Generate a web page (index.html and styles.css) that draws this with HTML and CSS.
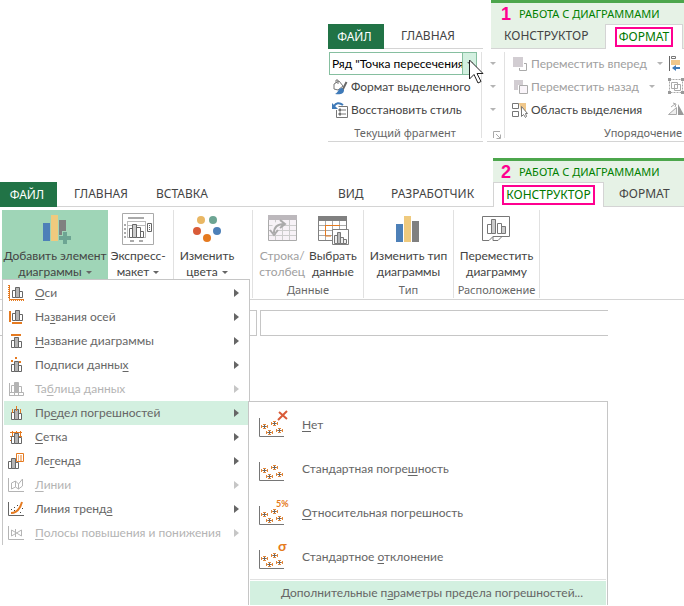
FILE: index.html
```
<!DOCTYPE html>
<html lang="ru">
<head>
  <meta charset="UTF-8" />
  <meta name="viewport" content="width=device-width, initial-scale=1.0"/>
  <title>Работа с диаграммами</title>
  <link rel="stylesheet" href="styles.css">
</head>
<body>

<!-- shared icon parts -->
<svg class="defs" width="0" height="0" aria-hidden="true">
  <symbol id="bars" viewBox="0 0 11 12">
    <path d="M.5 4.5h3v7h-3zM7.5 5.5h3v6h-3z" fill="#fff" stroke="currentColor"/>
    <path d="M3.5 1.5h4v10h-4z" fill="#b4b4b4" stroke="currentColor"/>
  </symbol>
  <symbol id="cross" viewBox="0 0 7 7">
    <path d="M.5 2v3M6.5 2v3M1 3.500h5M2 1.500h3M2 5.500h3" stroke="#e2873a" fill="none"/>
    <path d="M3.5 2v3M2 3.5h3" stroke="#666" fill="none"/>
  </symbol>
  <symbol id="scatter" viewBox="0 0 30 30">
    <path d="M2.500 8v18.500H27" stroke="#767676" fill="none"/>
    <use href="#cross" x="4" y="13" width="7" height="7"/>
    <use href="#cross" x="14" y="10" width="7" height="7"/>
    <use href="#cross" x="9" y="19" width="7" height="7"/>
    <use href="#cross" x="19" y="17" width="7" height="7"/>
  </symbol>
</svg>

<section class="format-ribbon">
  <div class="fragment">
    <nav class="tabs">
      <button class="tab file">ФАЙЛ</button>
      <button class="tab home">ГЛАВНАЯ</button>
    </nav>
    <div class="fragment-body">
      <div class="fragment-main">
        <div class="combo">
          <select aria-label="Элемент диаграммы"><option>Ряд "Точка пересечения"</option></select>
          <span class="combo-arrow"><i class="caret"></i></span>
          <svg class="cursor" width="16" height="26" viewBox="0 0 16 26"><path d="M1.500 1v19l4.500-4.500 4 8.500 3-1.500-4-8h6z" fill="#fff" stroke="#222"/></svg>
        </div>
        <button class="row-button">
          <svg width="16" height="16" viewBox="0 0 16 16"><path d="M2 5l5-3 4 5-5 4-4-1zM4 4V1h2v4" fill="#fff" stroke="#777"/><path d="M14.500 3l-4 8" stroke="#666" stroke-width="2"/><path d="M10 9c-4 0-3 4-7 6 5 1 9 0 9-4z" fill="#3f7ab8"/></svg>
          Формат выделенного
        </button>
        <button class="row-button">
          <svg width="16" height="16" viewBox="0 0 16 16"><path d="M6.500 4.500h9v11h-11V8" fill="#fff" stroke="#777"/><path d="M7 7h2v2H7zM7 11h2v2H7zM10 8h4M10 12h4" fill="#666" stroke="#777"/><path d="M11 3C7 0 4 1 2 4" fill="none" stroke="#3f7ab8" stroke-width="2"/><path d="M0 1v6h6z" fill="#3f7ab8"/></svg>
          Восстановить стиль
        </button>
        <div class="group-label">Текущий фрагмент</div>
      </div>
    </div>
  </div>

  <div class="arrange">
    <div class="context">
      <div class="context-title"><b>1</b>РАБОТА С ДИАГРАММАМИ</div>
      <nav class="tabs">
        <button class="tab designer">КОНСТРУКТОР</button>
        <button class="tab active"><span class="marked">ФОРМАТ</span></button>
      </nav>
    </div>
    <div class="arrange-body">
      <div class="carets">
        <i class="caret light"></i><i class="caret light"></i><i class="caret light"></i>
        <svg class="launcher" width="8" height="8" viewBox="0 0 8 8"><path d="M.5 7V.5H7M3 3l4 4M7.500 3.500v4h-4" fill="none" stroke="#aaa"/></svg>
      </div>
      <div class="arrange-list">
        <button class="row-button" disabled>
          <svg width="16" height="16" viewBox="0 0 16 16"><path d="M1 1h10v10H1z" fill="#d2cdd2"/><path d="M12 7.500h2.500v7h-7V12" fill="none" stroke="#aaa"/></svg>
          Переместить вперед<i class="caret light"></i>
        </button>
        <button class="row-button" disabled>
          <svg width="16" height="16" viewBox="0 0 16 16"><path d="M2 1h9v5H6v5H2z" fill="#d2cdd2"/><path d="M7.500 6.500h8v8h-8z" fill="#faf5fa" stroke="#aaa"/></svg>
          Переместить назад<i class="caret light"></i>
        </button>
        <button class="row-button">
          <svg width="16" height="16" viewBox="0 0 16 16"><path d="M7 1h7v8H9z" fill="#efc78b"/><path d="M.5 1.500h6v5h-6zM.5 9.500h6v5h-6z" fill="#fff" stroke="#777"/><path d="M9.500 4.500v10l2-2 2 3 1-1-1-3h2z" fill="#fff" stroke="#777"/></svg>
          Область выделения
        </button>
        <div class="group-label">Упорядочение</div>
      </div>
      <div class="tools">
        <svg width="14" height="16" viewBox="0 0 14 16"><path d="M1.500 1v15" stroke="#666"/><path d="M3.500 1.500h4v2h-4z" fill="#fff" stroke="#777"/><path d="M3 5h9v5H3z" fill="#efc78b"/><path d="M12 13H6" stroke="#3f7ab8" stroke-width="2"/><path d="M4 13l4-3v6z" fill="#3f7ab8"/></svg>
        <svg width="16" height="16" viewBox="0 0 16 16"><path d="M1.500 1.500h13v13h-13z" fill="none" stroke="#aaa" stroke-dasharray="2 1"/><path d="M3.500 4.500h6v6h-6zM6.500 6.500h6v6h-6z" fill="none" stroke="#aaa"/><path d="M0 0h3v3H0zM13 0h3v3h-3zM0 13h3v3H0zM13 13h3v3h-3z" fill="#999"/></svg>
        <svg width="16" height="16" viewBox="0 0 16 16"><path d="M.5 13.500h8v-7z" fill="#eee" stroke="#aaa"/><path d="M10 3v11h6z" fill="#999"/><path d="M3 6l4-3M5 2l3 1-1 3" fill="none" stroke="#aaa"/></svg>
      </div>
    </div>
  </div>
</section>

<section class="design-ribbon">
  <div class="header">
    <nav class="tabs main-tabs">
      <button class="tab file">ФАЙЛ</button>
      <button class="tab home">ГЛАВНАЯ</button>
      <button class="tab insert">ВСТАВКА</button>
      <button class="tab view">ВИД</button>
      <button class="tab developer">РАЗРАБОТЧИК</button>
    </nav>
    <div class="context">
      <div class="context-title"><b>2</b>РАБОТА С ДИАГРАММАМИ</div>
      <nav class="tabs">
        <button class="tab active"><span class="marked">КОНСТРУКТОР</span></button>
        <button class="tab format">ФОРМАТ</button>
      </nav>
    </div>
  </div>

  <div class="groups">
    <div class="group layouts">
      <div class="group-buttons">
        <button class="big-button add-element">
          <svg width="32" height="32" viewBox="0 0 32 32"><path d="M4 10h7v18H4z" fill="#4d80b8"/><path d="M12 2h7v26h-7z" fill="#efca7e"/><path d="M20 7h7v15h-7z" fill="#808080"/><path d="M23 18h6v5h4v6h-4v4h-6v-4h-4v-6h4z" fill="#9fd5b7"/><path d="M24 19h4v4h4v4h-4v4h-4v-4h-4v-4h4z" fill="#6da593"/></svg>
          <span>Добавить элемент<br>диаграммы<i class="caret"></i></span>
        </button>
        <button class="big-button express">
          <svg width="32" height="32" viewBox="0 0 32 32"><path d="M.5.500h31v31H.500z" fill="#fff" stroke="#aaa"/><path d="M6 5h16M2 12h2M2 16h2M2 20h2M2 24h2M8 28h4M17 28h4" stroke="#aaa" stroke-width="2"/><path d="M5 8.500h19M5.500 8v17M5 24.500h19M6 12.500h17M23.500 8v17" stroke="#bbb"/><path d="M7.500 15.500h3v9h-3zM14.500 14.500h4v10h-4zM18.500 18.500h3v6h-3z" fill="#fff" stroke="#666"/><path d="M10.500 11.500h4v13h-4z" fill="#ccc" stroke="#666"/><path d="M25.500 10.500h4v8h-4z" fill="#fff" stroke="#666"/><path d="M27 12h1v1h-1zM27 14h1v1h-1zM27 16h1v1h-1z" fill="#666"/></svg>
          <span>Экспресс-<br>макет<i class="caret"></i></span>
        </button>
      </div>
    </div>
    <div class="group colors">
      <div class="group-buttons">
        <button class="big-button">
          <svg width="32" height="32" viewBox="0 0 32 32"><circle cx="10" cy="7" r="4" fill="#e9b764"/><circle cx="22" cy="7" r="4" fill="#6da593"/><circle cx="6" cy="18" r="4" fill="#d95b38"/><circle cx="26" cy="18" r="4" fill="#4d80b8"/><circle cx="16" cy="25" r="4" fill="#e57a20"/></svg>
          <span>Изменить<br>цвета<i class="caret"></i></span>
        </button>
      </div>
    </div>
    <div class="group data">
      <div class="group-buttons">
        <button class="big-button" disabled>
          <svg width="32" height="32" viewBox="0 0 32 32"><path d="M2.500 2.500h28v25h-28z" fill="#f7f2f7" stroke="#aaa"/><path d="M2 2h29v5H2z" fill="#bcb8bc"/><path d="M3 12.500h27M3 17.500h27M3 22.500h27M9.500 7v20M16.500 7v20M23.500 7v20" stroke="#ccc"/><path d="M8 21C6 14 11 9 18 10" stroke="#f7f2f7" stroke-width="5" fill="none"/><path d="M8 20c0-6 4-9 10-9M14 7l5 4-5 4M4 17l4 5 4-5" fill="none" stroke="#aaa" stroke-width="2"/></svg>
          <span>Строка/<br>столбец</span>
        </button>
        <button class="big-button">
          <svg width="32" height="32" viewBox="0 0 32 32"><path d="M1.500 3.500h28v24h-28z" fill="#fff" stroke="#808080"/><path d="M1 3h29v5H1z" fill="#808080"/><path d="M2 12.500h27M2 17.500h27M2 22.500h27M8.500 8v19M15.500 8v19M22.500 8v19" stroke="#aaa"/><path d="M9 12.500h14M8.500 12v11H14" fill="none" stroke="#e57a20"/><path d="M15.500 16.500h16v15h-16z" fill="#fff" stroke="#808080"/><path d="M17.500 22.500h3v8h-3zM23.500 24.500h3v6h-3zM26.500 26.500h3v4h-3z" fill="#eee" stroke="#777"/><path d="M20.500 19.500h3v11h-3z" fill="#bbb" stroke="#777"/></svg>
          <span>Выбрать<br>данные</span>
        </button>
      </div>
      <div class="group-label">Данные</div>
    </div>
    <div class="group type">
      <div class="group-buttons">
        <button class="big-button">
          <svg width="32" height="32" viewBox="0 0 32 32"><path d="M4 11h7v18H4z" fill="#4d80b8"/><path d="M12 3h7v26h-7z" fill="#efca7e"/><path d="M20 8h7v21h-7z" fill="#808080"/></svg>
          <span>Изменить тип<br>диаграммы</span>
        </button>
      </div>
      <div class="group-label">Тип</div>
    </div>
    <div class="group location">
      <div class="group-buttons">
        <button class="big-button">
          <svg width="32" height="32" viewBox="0 0 32 32"><path d="M2.500 3.500h27v20h-27z" fill="#fff"/><path d="M29.500 23.500v-20h-27v24H9l4-4h16.500M13 27.500h5l4-4M13 23.500v4" fill="none" stroke="#777"/><path d="M7.500 11.500h4v9h-4zM17.500 10.500h4v10h-4z" fill="#fff" stroke="#777"/><path d="M11.500 6.500h4v14h-4zM21.500 13.500h4v7h-4z" fill="#ccc" stroke="#777"/></svg>
          <span>Переместить<br>диаграмму</span>
        </button>
      </div>
      <div class="group-label">Расположение</div>
    </div>
  </div>

  <div class="formula-bar">
    <div class="name-box"></div>
    <input class="formula" type="text" aria-label="Строка формул">
  </div>

  <div class="menu">
    <button class="menu-item"><svg width="16" height="16" viewBox="0 0 16 16"><path d="M1.500 0v14.500H16" fill="none" stroke="#e57a20"/><path d="M.5 0v14M1 15.500h15" stroke="#e57a20" stroke-dasharray="1 1"/><use href="#bars" x="4" y="1" width="11" height="12"/></svg><span><u>О</u>си</span></button>
    <button class="menu-item"><svg width="16" height="16" viewBox="0 0 16 16"><path d="M1 2h2v11H1zM4 13h10v2H4z" fill="#e57a20"/><use href="#bars" x="4" y="0" width="11" height="12"/></svg><span>На<u>з</u>вания осей</span></button>
    <button class="menu-item"><svg width="16" height="16" viewBox="0 0 16 16"><path d="M3 1h10v2H3z" fill="#e57a20"/><use href="#bars" x="3" y="3" width="11" height="12"/></svg><span><u>Н</u>азвание диаграммы</span></button>
    <button class="menu-item"><svg width="16" height="16" viewBox="0 0 16 16"><path d="M7 0h2v2H7zM3 3h2v2H3zM11 4h2v2h-2z" fill="#e57a20"/><use href="#bars" x="3" y="3" width="11" height="12"/></svg><span>Подписи данны<u>х</u></span></button>
    <button class="menu-item" disabled><svg width="16" height="16" viewBox="0 0 16 16"><use href="#bars" x="3" y="0" width="11" height="12"/><path d="M1.500 2v13M2 11.500h13.500v3H1M6.500 11v4M10.500 11v4" fill="none" stroke="currentColor"/></svg><span>Та<u>б</u>лица данных</span></button>
    <button class="menu-item selected"><svg width="16" height="16" viewBox="0 0 16 16"><use href="#bars" x="3" y="3" width="11" height="12"/><path d="M4.500 4v4M8.500 1v5M12.500 4v4" stroke="#e57a20"/></svg><span>Пр<u>е</u>дел погрешностей</span></button>
    <button class="menu-item"><svg width="16" height="16" viewBox="0 0 16 16"><path d="M2 3.500h12M2 7.500h12M2 11.500h12M4.500 2v12M8.500 2v12M12.500 2v12" stroke="#e57a20"/><use href="#bars" x="3" y="3" width="11" height="12"/></svg><span><u>С</u>етка</span></button>
    <button class="menu-item"><svg width="16" height="16" viewBox="0 0 16 16"><use href="#bars" x="0" y="4" width="11" height="12"/><path d="M8.500.500h7v8h-7z" fill="#fff" stroke="#e57a20"/><path d="M10 3h1M12 3h2M10 5h1M12 5h2M10 7h1M12 7h2" stroke="#e57a20"/></svg><span>Ле<u>г</u>енда</span></button>
    <button class="menu-item" disabled><svg width="16" height="16" viewBox="0 0 16 16"><path d="M.500 1v13.500H16M3.500 12V6l4-2v6zM7.500 4l3 3v5l-3-2M10.500 7l4-5v7l-4 3" fill="none" stroke="currentColor"/></svg><span><u>Л</u>инии</span></button>
    <button class="menu-item"><svg width="16" height="16" viewBox="0 0 16 16"><path d="M.500 1v13.500H16" fill="none" stroke="currentColor"/><path d="M3 12c6 0 9-4 11-11" fill="none" stroke="#e57a20" stroke-width="2"/><path d="M3 8h1v1H3zM6 6h1v1H6zM9 4h1v1H9zM12 11h1v1h-1zM6 9h1v1H6zM14 7h1v1h-1z" fill="#444"/></svg><span>Линия тренд<u>а</u></span></button>
    <button class="menu-item" disabled><svg width="16" height="16" viewBox="0 0 16 16"><path d="M.500 1v13.500H16M3.500 5l10 6V5l-10 6zM7.500 4v8" fill="none" stroke="currentColor"/></svg><span><u>П</u>олосы повышения и понижения</span></button>
  </div>

  <div class="submenu">
    <button class="submenu-item"><svg width="30" height="30" viewBox="0 0 30 30"><use href="#scatter" width="30" height="30"/><path d="M22 2l8 7M30 1l-9 9" stroke="#d95b38" stroke-width="2"/></svg><span><u>Н</u>ет</span></button>
    <button class="submenu-item"><svg width="30" height="30" viewBox="0 0 30 30"><use href="#scatter" width="30" height="30"/></svg><span>Стандартная погре<u>ш</u>ность</span></button>
    <button class="submenu-item"><svg width="30" height="30" viewBox="0 0 30 30"><use href="#scatter" width="30" height="30"/><text x="19" y="9" class="icon-percent">5%</text></svg><span><u>О</u>тносительная погрешность</span></button>
    <button class="submenu-item"><svg width="30" height="30" viewBox="0 0 30 30"><use href="#scatter" width="30" height="30"/><text x="21" y="9" class="icon-sigma">σ</text></svg><span>Стандартное <u>о</u>тклонение</span></button>
    <button class="submenu-more"><span>Дополнительные п<u>а</u>раметры предела погрешностей...</span></button>
  </div>
</section>

</body>
</html>
```
FILE: styles.css
```
* {
  box-sizing: border-box;
}

body {
  margin: 0;
  min-height: 100vh;
  background: #fff;
  color: #444;
  font-family: Lato, "Noto Sans", sans-serif;
  font-size: 12px;
  line-height: 16px;
}

button {
  font: inherit;
  color: inherit;
  background: none;
  border: none;
  padding: 0;
  white-space: nowrap;
  cursor: pointer;
}

button:disabled {
  color: #a0a0a0;
}

svg {
  flex: none;
  overflow: visible;
}

u {
  text-underline-offset: 2px;
}

.defs {
  position: absolute;
}

.caret {
  display: inline-block;
  flex: none;
  border: 3px solid transparent;
  border-top-color: #666;
  border-bottom: none;
  margin-left: 4px;
  vertical-align: 2px;
}

.caret.light {
  border-top-color: #b4b4b4;
}

/* tabs */
.tabs {
  display: flex;
  height: 25px;
  border-bottom: 1px solid #d4d4d4;
  font-family: "Noto Sans", sans-serif;
}

.tab {
  height: 24px;
  text-align: left;
}

.tab.file {
  background: #217346;
  color: #fff;
  text-align: center;
  height: 25px;
  width: 56px;
  padding-right: 3px;
}

.home {
  padding-left: 17px;
}

.tab.active {
  background: #fff;
  color: #007800;
  height: 25px;
  border: 1px solid #d4d4d4;
  border-bottom: none;
  text-align: center;
}

.marked {
  display: inline-block;
  border: 2px solid #ff0090;
  padding: 0 2px;
}

.context {
  background: #e6f2e6;
  border-top: 3px solid #4ca64c;
}

.context-title {
  display: flex;
  align-items: center;
  height: 21px;
  color: #008000;
  font-family: "Noto Sans", sans-serif;
  font-size: 11px;
  white-space: nowrap;
}

.context-title b {
  color: #ff0090;
  font-family: "Liberation Sans", sans-serif;
  font-size: 18px;
  width: 18px;
}

.group-label {
  color: #666;
  font-family: "Noto Sans", sans-serif;
  font-size: 11px;
  text-align: center;
  white-space: nowrap;
}

/* format ribbon */
.format-ribbon {
  display: flex;
  align-items: flex-end;
  gap: 4px;
  height: 142px;
  padding-left: 328px;
}

.fragment {
  width: 155px;
  flex: none;
}

.fragment-body {
  height: 93px;
  padding: 3px 1px 0 0;
  border-bottom: 1px solid #d4d4d4;
}

.fragment-main {
  height: 86px;
  border-right: 1px solid #e1e1e1;
  padding-left: 1px;
}

.combo {
  position: relative;
  display: flex;
  width: 148px;
  height: 23px;
  border: 1px solid #86bfa0;
}

.combo select {
  flex: 1;
  min-width: 0;
  appearance: none;
  border: none;
  background: #fff;
  color: #000;
  font: inherit;
  padding: 0 0 0 2px;
}

.combo-arrow {
  display: flex;
  align-items: center;
  width: 14px;
  border-left: 1px solid #86bfa0;
  background: #d3f0e0;
}

.cursor {
  position: absolute;
  left: 138px;
  top: 6px;
}

.row-button {
  display: flex;
  align-items: center;
  gap: 3px;
  height: 23px;
}

.fragment .row-button {
  padding-left: 3px;
}

.format-ribbon .group-label {
  margin-top: 4px;
}

.arrange {
  flex: 1;
  min-width: 0;
}

.arrange .context {
  margin-left: 4px;
}

.arrange .context-title {
  padding-left: 10px;
}

.designer {
  width: 114px;
  padding-left: 13px;
}

.arrange .active {
  width: 78px;
}

.arrange-body {
  display: flex;
  height: 93px;
  padding-top: 3px;
  border-bottom: 1px solid #d4d4d4;
}

.carets {
  display: flex;
  flex-direction: column;
  align-items: center;
  gap: 20px;
  width: 18px;
  height: 86px;
  padding-top: 10px;
  border-right: 1px solid #e1e1e1;
}

.carets .caret {
  margin: 0 6px 0 0;
}

.launcher {
  margin-left: 2px;
}

.arrange-list {
  width: 160px;
  padding-left: 7px;
}

.arrange-list .caret {
  margin-left: 7px;
}

.arrange-list .group-label {
  padding-left: 92px;
  text-align: left;
}

.tools {
  display: flex;
  flex-direction: column;
  gap: 7px;
  padding: 3px 0 0 3px;
}

/* design ribbon */
.design-ribbon {
  position: relative;
  margin-top: 16px;
}

.header {
  display: flex;
  align-items: flex-end;
}

.main-tabs {
  width: 493px;
  flex: none;
}

.main-tabs .file {
  width: 57px;
}

.main-tabs .home {
  width: 99px;
}

.insert {
  width: 182px;
}

.view {
  width: 53px;
}

.header .context {
  flex: 1;
  min-width: 0;
}

.header .context-title {
  padding-left: 8px;
}

.header .active {
  width: 111px;
}

.format {
  padding-left: 15px;
}

.groups {
  display: flex;
  height: 93px;
  padding: 3px 0 0 2px;
  border-bottom: 1px solid #d4d4d4;
}

.group {
  display: flex;
  flex-direction: column;
  justify-content: space-between;
  height: 88px;
  border-right: 1px solid #e1e1e1;
}

.group-buttons {
  display: flex;
  justify-content: center;
  gap: 4px;
}

.layouts .group-buttons {
  justify-content: flex-start;
  gap: 0;
}

.layouts {
  width: 172px;
}

.colors {
  width: 79px;
}

.colors .group-buttons {
  padding-right: 12px;
}

.data {
  width: 111px;
}

.type {
  width: 90px;
}

.location {
  width: 86px;
}

.big-button {
  display: flex;
  flex-direction: column;
  align-items: center;
  gap: 3px;
  padding-top: 3px;
}

.add-element {
  width: 106px;
  height: 70px;
  background: #9fd5b7;
}

.express {
  width: 60px;
}

.formula-bar {
  display: flex;
  gap: 3px;
  padding: 10px 76px 0 0;
}

.name-box {
  width: 257px;
  height: 26px;
  border: 1px solid #c6c6c6;
  border-left: none;
}

.formula {
  flex: 1;
  min-width: 0;
  height: 26px;
  border: 1px solid #c6c6c6;
  border-right: none;
  background: #fff;
}

/* drop-down menus */
.menu {
  position: absolute;
  top: 121px;
  left: 2px;
  width: 248px;
  padding: 1px 1px 0;
  background: #fff;
  border: 1px solid #c6c6c6;
  border-bottom: none;
}

.menu-item {
  display: flex;
  align-items: center;
  gap: 11px;
  width: 100%;
  height: 24px;
  padding: 0 9px 0 4px;
  color: #666;
}

.menu-item::after {
  content: "";
  margin-left: auto;
  border: 4px solid transparent;
  border-left: 5px solid #666;
  border-right: none;
}

.menu-item:disabled {
  color: #b4b4b4;
}

.menu-item:disabled::after {
  border-left-color: #c6c6c6;
}

.menu-item.selected,
.submenu-more {
  background: #d3f0e0;
}

.submenu {
  position: absolute;
  top: 243px;
  left: 248px;
  width: 360px;
  padding: 1px 1px 0;
  background: #fff;
  border: 1px solid #c6c6c6;
  border-bottom: none;
  color: #666;
}

.submenu-item {
  display: flex;
  align-items: center;
  gap: 15px;
  width: 100%;
  height: 44px;
  padding-left: 7px;
}

.submenu-more {
  display: block;
  width: 100%;
  height: 24px;
  margin-top: 2px;
  padding-left: 8px;
  box-shadow: 0 -1px #fff, 0 -2px #e1e1e1;
}

.icon-percent {
  fill: #e57a20;
  font-size: 9px;
  font-weight: bold;
}

.icon-sigma {
  fill: #e57a20;
  font-size: 14px;
  font-weight: bold;
}
```
